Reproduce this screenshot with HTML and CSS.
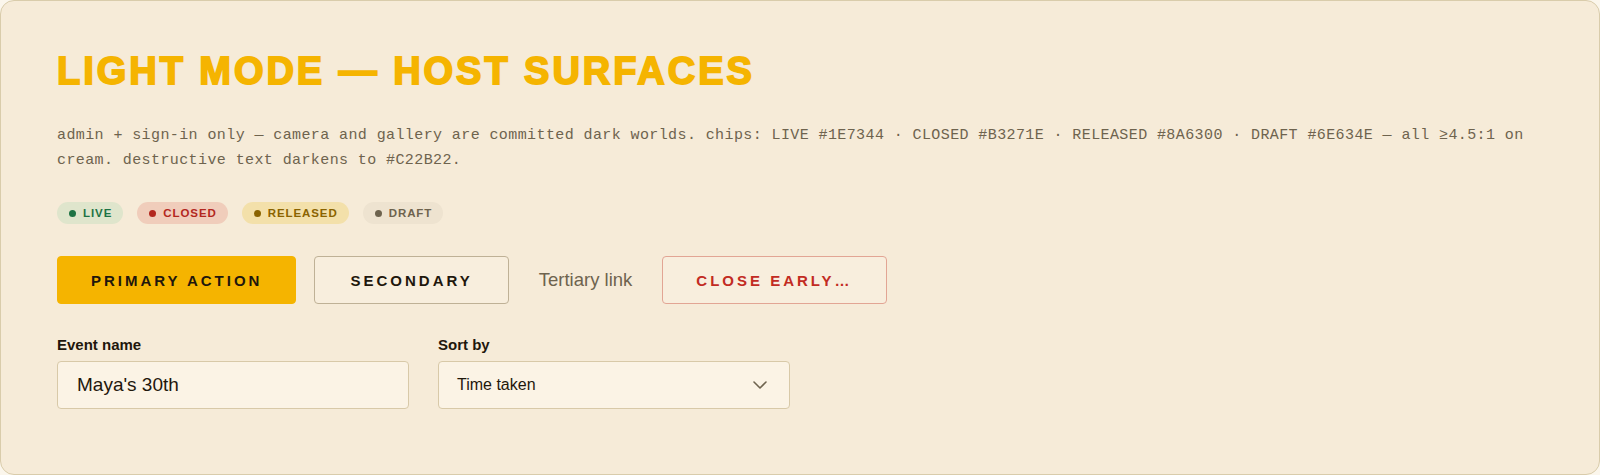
FILE: index.html
```html
<!DOCTYPE html>
<html lang="en">
<head>
    <meta charset="UTF-8">
    <meta name="viewport" content="width=device-width, initial-scale=1.0">
    <title>Light mode — host surfaces</title>
    <link rel="stylesheet" href="styles.css">
</head>
<body>
    <section class="panel">
        <h1 class="panel-title">Light mode — host surfaces</h1>

        <p class="panel-note">admin + sign-in only — camera and gallery are committed dark worlds. chips: LIVE #1E7344 · CLOSED #B3271E · RELEASED #8A6300 · DRAFT #6E634E — all ≥4.5:1 on cream. destructive text darkens to #C22B22.</p>

        <!-- status chips -->
        <div class="chips">
            <span class="chip chip-live"><i class="dot"></i>Live</span>
            <span class="chip chip-closed"><i class="dot"></i>Closed</span>
            <span class="chip chip-released"><i class="dot"></i>Released</span>
            <span class="chip chip-draft"><i class="dot"></i>Draft</span>
        </div>

        <!-- actions -->
        <div class="actions">
            <button class="btn btn-primary">Primary action</button>
            <button class="btn btn-secondary">Secondary</button>
            <a class="link-tertiary" href="#">Tertiary link</a>
            <button class="btn btn-danger">Close early…</button>
        </div>

        <!-- form fields -->
        <div class="fields">
            <label class="field">
                <span class="field-label">Event name</span>
                <input class="field-input" type="text" value="Maya's 30th">
            </label>
            <div class="field">
                <span class="field-label">Sort by</span>
                <div class="field-select">
                    <span>Time taken</span>
                    <svg width="14" height="8" viewBox="0 0 14 8" fill="none">
                        <path d="M1 1l6 6 6-6" stroke="#6e634e" stroke-width="1.6" stroke-linecap="round" stroke-linejoin="round"/>
                    </svg>
                </div>
            </div>
        </div>
    </section>
</body>
</html>
```

FILE: styles.css
```css
* {
    box-sizing: border-box;
}

body {
    margin: 0;
    background-color: #fbf6ec;
    font-family: "Liberation Sans", Arial, sans-serif;
    color: #1f170c;
}

.panel {
    height: 100vh;
    background-color: #f6ebd8;
    border: 1px solid #d9ccab;
    border-radius: 14px;
    padding: 51px 56px 0;
}

.panel-title {
    margin: 0;
    font-size: 38px;
    line-height: 1;
    font-weight: 700;
    letter-spacing: 0.078em;
    text-transform: uppercase;
    color: #f5b400;
    -webkit-text-stroke: 1.8px #f5b400;
}

.panel-note {
    margin: 34px 0 0;
    font-family: "Liberation Mono", "DejaVu Sans Mono", monospace;
    font-size: 15px;
    letter-spacing: 0.4px;
    line-height: 24.5px;
    color: #6e634e;
}

.chips {
    display: flex;
    gap: 14px;
    margin-top: 29px;
}

.chip {
    display: inline-flex;
    align-items: center;
    gap: 7px;
    height: 22px;
    padding: 0 11px 0 12px;
    border-radius: 11px;
    font-size: 11.5px;
    font-weight: 700;
    letter-spacing: 0.08em;
    text-transform: uppercase;
}

.chip .dot {
    width: 7px;
    height: 7px;
    border-radius: 50%;
    background-color: currentColor;
}

.chip-live {
    background-color: #dfe5cc;
    color: #1e7344;
}

.chip-closed {
    background-color: #f0cdbb;
    color: #b3271e;
}

.chip-released {
    background-color: #f3e0aa;
    color: #8a6300;
}

.chip-draft {
    background-color: #eee3d0;
    color: #6e634e;
}

.actions {
    display: flex;
    align-items: center;
    gap: 18px;
    margin-top: 32px;
}

.btn {
    height: 48px;
    padding: 0 33px;
    border-radius: 4px;
    font-family: "Liberation Sans", Arial, sans-serif;
    font-size: 15px;
    font-weight: 700;
    letter-spacing: 0.2em;
    text-transform: uppercase;
    cursor: pointer;
}

.btn-primary {
    background-color: #f5b400;
    border: 1px solid #f5b400;
    color: #1f170c;
}

.btn-secondary {
    padding: 0 35px;
    background-color: #f8eedd;
    border: 1px solid #bfb196;
    color: #1f170c;
}

.btn-danger {
    background-color: #f8eedd;
    border: 1px solid #e2a594;
    color: #c22b22;
}

.link-tertiary {
    padding: 0 12px;
    font-size: 18.5px;
    color: #6e634e;
    text-decoration: none;
}

.fields {
    display: grid;
    grid-template-columns: 352px 352px;
    gap: 29px;
    margin-top: 31px;
}

.field {
    display: flex;
    flex-direction: column;
    gap: 6px;
}

.field-label {
    font-size: 15px;
    line-height: 20px;
    font-weight: 700;
    color: #1f170c;
}

.field-input,
.field-select {
    height: 48px;
    background-color: #fbf3e5;
    border: 1px solid #d8c9a8;
    border-radius: 4px;
    color: #1f170c;
    font-family: "Liberation Sans", Arial, sans-serif;
}

.field-input {
    padding: 0 19px;
    font-size: 19px;
    outline: none;
}

.field-select {
    display: flex;
    align-items: center;
    justify-content: space-between;
    padding: 0 22px 0 18px;
    font-size: 16px;
}
```
